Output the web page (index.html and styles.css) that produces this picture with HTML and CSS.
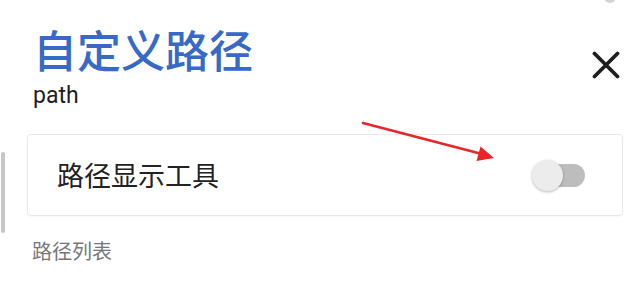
FILE: index.html
```html
<!DOCTYPE html>
<html lang="zh-CN">
<head>
<meta charset="utf-8">
<title>自定义路径</title>
<link rel="stylesheet" href="styles.css">
</head>
<body>
<div class="page">
  <div class="top-dot"></div>
  <div class="scrollbar"></div>
  <header class="header">
    <div class="heading">
      <h1 class="title">自定义路径</h1>
      <div class="subtitle">path</div>
    </div>
    <button class="close" aria-label="关闭">
      <svg width="28" height="28" viewBox="0 0 28 28">
        <path d="M2.5 2.5 L25.5 25.5 M25.5 2.5 L2.5 25.5" stroke="#1e1e1e" stroke-width="3.8" stroke-linecap="round" fill="none"/>
      </svg>
    </button>
  </header>
  <section class="card">
    <span class="card-label">路径显示工具</span>
    <span class="toggle"><span class="knob"></span></span>
  </section>
  <div class="section-label">路径列表</div>
  <svg class="arrow" width="640" height="301" viewBox="0 0 640 301">
    <line x1="363" y1="123" x2="482" y2="154" stroke="#e8262a" stroke-width="2.6" stroke-linecap="round"/>
    <polygon points="494,158 480.5,146.5 476.5,161" fill="#e8262a"/>
  </svg>
</div>
</body>
</html>
```
FILE: styles.css
```css
* { box-sizing: border-box; }
html, body { margin: 0; padding: 0; background: #ffffff; }
.page {
  position: relative;
  width: 640px;
  height: 301px;
  overflow: hidden;
  font-family: "Noto Sans CJK SC", "Noto Sans", sans-serif;
  background: #ffffff;
}
.top-dot {
  position: absolute;
  left: 604px;
  top: -9px;
  width: 12px;
  height: 12px;
  border-radius: 50%;
  background: #d4d4d4;
}
.scrollbar {
  position: absolute;
  left: 1px;
  top: 152px;
  width: 4px;
  height: 81px;
  border-radius: 2px;
  background: #c6c6c6;
}
.header {
  display: flex;
  justify-content: space-between;
  align-items: flex-start;
  padding: 27px 20px 0 33px;
}
.heading { display: flex; flex-direction: column; }
.title {
  margin: 0;
  font-size: 44px;
  line-height: 44px;
  font-weight: 500;
  color: #3869c6;
}
.subtitle {
  margin-top: 12px;
  font-family: Roboto, "Noto Sans", sans-serif;
  font-size: 23px;
  line-height: 25px;
  color: #1e1e1e;
}
.close {
  margin-top: 24px;
  padding: 0;
  border: 0;
  background: transparent;
  width: 28px;
  height: 28px;
  display: flex;
}
.card {
  margin: 26px 17px 0 27px;
  height: 82px;
  border: 1px solid #e8e8e8;
  border-radius: 4px;
  box-shadow: 0 1px 2px rgba(0,0,0,0.04);
  display: flex;
  align-items: center;
  justify-content: space-between;
  padding: 0 37px 0 29px;
}
.card-label {
  font-size: 27px;
  line-height: 30px;
  color: #222222;
}
.toggle {
  position: relative;
  width: 48px;
  height: 23px;
  border-radius: 12px;
  background: #bdbdbd;
}
.knob {
  position: absolute;
  left: -5px;
  top: -4px;
  width: 31px;
  height: 31px;
  border-radius: 50%;
  background: #ececec;
  box-shadow: 0 1px 3px rgba(0,0,0,0.28);
}
.section-label {
  margin: 25px 0 0 32px;
  font-size: 20px;
  line-height: 20px;
  color: #777777;
}
.arrow {
  position: absolute;
  left: 0;
  top: 0;
  pointer-events: none;
}
```
